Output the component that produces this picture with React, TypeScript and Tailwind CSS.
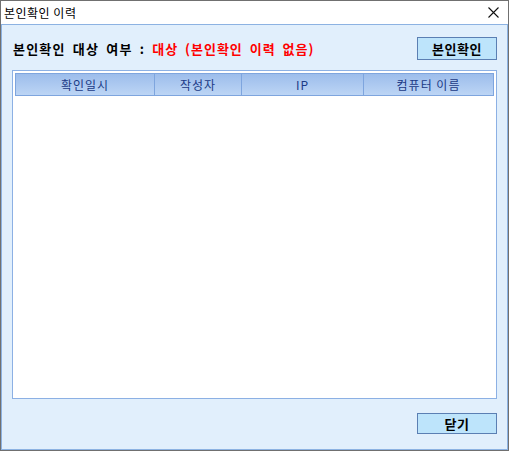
import * as React from "react";

const columns = [
  { label: "확인일시", width: "w-[139px]" },
  { label: "작성자", width: "w-[87px]" },
  { label: "IP", width: "w-[122px]" },
  { label: "컴퓨터 이름", width: "flex-1" },
];

function CloseIcon() {
  return (
    <svg width="11" height="11" viewBox="0 0 11 11" className="block">
      <path d="M0.5 0.5 L10.5 10.5 M10.5 0.5 L0.5 10.5" stroke="#111" strokeWidth="1.1" />
    </svg>
  );
}

function App() {
  return (
    <div
      className="w-[509px] h-[451px] border border-[#707070] flex flex-col bg-white"
      style={{ fontFamily: '"Noto Sans CJK KR", "Noto Sans", sans-serif' }}
    >
      {/* title bar */}
      <div className="h-[23px] flex items-center justify-between pl-[3px] pr-[9px] bg-white">
        <span className="text-[12px] text-black leading-none tracking-[0.5px]">본인확인 이력</span>
        <CloseIcon />
      </div>

      <div className="flex-1 flex flex-col bg-[#e1effc] border border-[#8cb2e2] px-[10px]">
        <div className="flex items-center justify-between mt-[12px] h-[23px]">
          <div className="flex items-center gap-[7px] pl-[1px] text-[13px] font-bold leading-none [word-spacing:3px]">
            <span className="text-black tracking-[1.2px]">본인확인 대상 여부 :</span>
            <span className="text-[#ff0000] tracking-[1px]">대상 (본인확인 이력 없음)</span>
          </div>
          <button className="w-[80px] h-[23px] border border-[#5b7fb3] bg-[#bde4fb] text-[13px] font-bold text-black leading-none tracking-[0.5px]">
            본인확인
          </button>
        </div>

        <div className="mt-[10px] h-[329px] border border-[#8cb0e4] bg-white p-[2px]">
          <div className="flex h-[23px] border border-[#7ea5de] bg-gradient-to-b from-[#9dbdeb] to-[#bcd5f5]">
            {columns.map((c, i) => (
              <div
                key={c.label}
                className={`${c.width} flex items-center justify-center text-[12px] text-[#1b3a86] tracking-[1px] ${
                  i < columns.length - 1 ? "border-r border-[#7ea5de]" : ""
                }`}
              >
                {c.label}
              </div>
            ))}
          </div>
        </div>

        <div className="flex justify-end mt-[14px]">
          <button className="w-[80px] h-[21px] border border-[#5b7fb3] bg-[#bde4fb] text-[13px] font-bold text-black leading-none tracking-[0.5px]">
            닫기
          </button>
        </div>
      </div>
    </div>
  );
}

export default App;
